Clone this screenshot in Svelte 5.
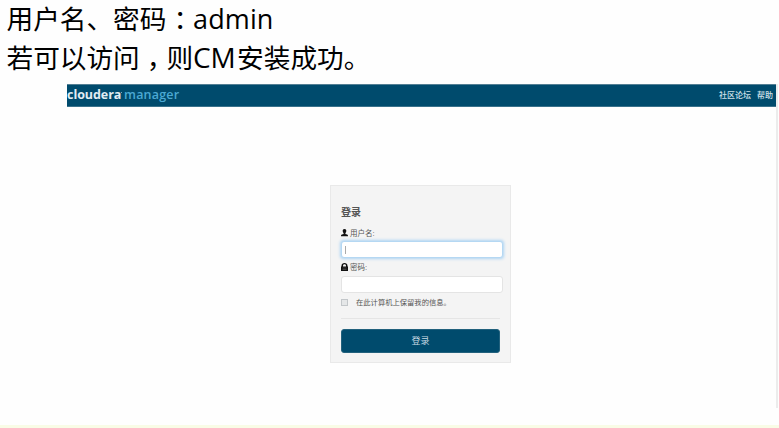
<script>
  let username = $state('');
  let password = $state('');
  let remember = $state(false);
</script>

<div class="page">
  <div class="notes">
    <p>用户名、密码<span class="colon">：</span><span class="latin admin">admin</span></p>
    <p>若可以访问<span class="comma">，</span>则<span class="latin cm">CM</span>安装成功。</p>
  </div>

  <div class="shot">
    <header>
      <div class="logo"><b>cloudera</b><i></i><span>manager</span></div>
      <nav><a href="#forum">社区论坛</a><a href="#help">帮助</a></nav>
    </header>
    <main>
      <form onsubmit={(e) => e.preventDefault()}>
        <h1>登录</h1>
        <label for="user">
          <svg width="7" height="8" viewBox="0 0 14 16"><path d="M7 0C4.500 0 3.200 1.800 3.400 4.200 3.600 6.400 4.400 7.600 5.200 8.300V10L1.800 11C.5 11.500 0 12.500 0 14.500H14C14 12.500 13.500 11.500 12.200 11L8.800 10V8.300C9.600 7.600 10.400 6.400 10.600 4.200 10.800 1.800 9.500 0 7 0Z" /></svg>
          <span>用户名:</span>
        </label>
        <div class="field focus"><i class="caret"></i><input id="user" bind:value={username} /></div>
        <label for="pass" class="second">
          <svg width="7" height="8" viewBox="0 0 14 16"><path fill-rule="evenodd" d="M1 7V5.500C1 2 3.500 0 7 0S13 2 13 5.500V7H14V16H0V7ZM4 7H10V5.500C10 3.700 9 2.500 7 2.500S4 3.700 4 5.500Z" /><path d="M3 10H11M3 13H11" stroke="#777" /></svg>
          <span>密码:</span>
        </label>
        <div class="field"><input id="pass" type="password" bind:value={password} /></div>
        <label class="remember"><input type="checkbox" bind:checked={remember} /><span>在此计算机上保留我的信息。</span></label>
        <hr />
        <button>登录</button>
      </form>
    </main>
  </div>
  <div class="strip"></div>
</div>

<style>
  .page {
    width: 779px;
    height: 428px;
    box-sizing: border-box;
    overflow: hidden;
    display: flex;
    flex-direction: column;
    background: #fefefe;
    font-family: "Liberation Sans", "Noto Sans CJK SC", sans-serif;
  }
  .notes {
    height: 84px;
    flex: none;
    padding-left: 6.5px;
    box-sizing: border-box;
    color: #000;
    font: 400 26.67px/35px "Noto Sans CJK SC", sans-serif;
  }
  p { margin: 0; height: 38.5px; white-space: nowrap; }
  .latin { font-family: "Open Sans", "Noto Sans", sans-serif; line-height: 1; display: inline-block; }
  .admin { font-size: 27px; letter-spacing: 0.1px; }
  .cm { width: 44px; font-size: 28px; letter-spacing: -0.2px; }
  .colon { margin-left: 7px; letter-spacing: -7px; }
  .comma { margin-left: 7px; letter-spacing: -7px; }
  .shot {
    height: 324px;
    flex: none;
    margin-left: 67px;
    margin-right: 1px;
    border-right: 2px solid #ececec;
    box-sizing: border-box;
    display: flex;
    flex-direction: column;
  }
  header {
    height: 23px;
    flex: none;
    box-sizing: border-box;
    border-top: 1px solid #537f94;
    border-bottom: 1px solid #39718b;
    background: #004b6d;
    display: flex;
    justify-content: space-between;
    padding-right: 3px;
  }
  .logo { display: flex; height: 20px; font: 12.5px/20px "Open Sans", sans-serif; color: #4ba9d3; }
  .logo b { width: 53.5px; color: #e2edf3; letter-spacing: -0.05px; }
  .logo i { width: 1px; height: 1px; margin: 7px 2.5px 0 0; background: #7da8bd; }
  .logo span { letter-spacing: 0.2px; font-weight: 600; }
  nav { display: flex; gap: 6px; font-size: 8px; line-height: 22px; }
  nav a { color: #d0e1e9; text-decoration: none; font-weight: 500; }
  main { flex: 1; padding: 78px 0 0 263px; }
  form {
    width: 181px;
    height: 178px;
    box-sizing: border-box;
    border: 1px solid #e9e9e9;
    background: #f4f4f4;
    padding: 20px 7px 0 10px;
    color: #555;
  }
  h1 { margin: 0; font-size: 10px; line-height: 14px; height: 19px; color: #555; font-weight: 600; }
  label { display: flex; align-items: center; height: 16px; font-size: 7.5px; line-height: 12px; gap: 2px; color: #555; }
  label span { position: relative; top: 1px; }
  label svg { fill: #111; }
  .second { height: 18px; }
  .field {
    width: 162px;
    height: 17px;
    box-sizing: border-box;
    border: 1px solid #e4e4e4;
    border-radius: 3px;
    background: #fff;
    display: flex;
    align-items: center;
  }
  .focus { border-color: #b5d8f3; box-shadow: 0 0 3px 0.5px #add4f3; }
  .caret { width: 1px; height: 8px; background: #aaa; margin-left: 3px; flex: none; }
  .field input { border: 0; outline: 0; padding: 0 2px; min-width: 0; width: 100%; height: 12px; font-size: 8px; background: transparent; }
  .remember { height: 20px; gap: 8px; font-size: 7.3px; }
  .remember span { top: 0; }
  .remember input {
    appearance: none;
    width: 7px;
    height: 7px;
    margin: 0 0 1px;
    border: 1px solid #c3c7ca;
    background: #e5e7e8;
    box-sizing: border-box;
  }
  hr { width: 159px; margin: 5px 0 10px; border: 0; height: 1px; background: #e5e5e5; }
  button {
    display: block;
    width: 159px;
    height: 24px;
    padding: 0;
    border: 1px solid #22617d;
    border-radius: 3px;
    background: #004b6d;
    color: #c9dae3;
    font: 9px/20px "Noto Sans CJK SC", sans-serif;
  }
  .strip { margin-top: auto; height: 3px; background: #f9fce6; flex: none; }
</style>
